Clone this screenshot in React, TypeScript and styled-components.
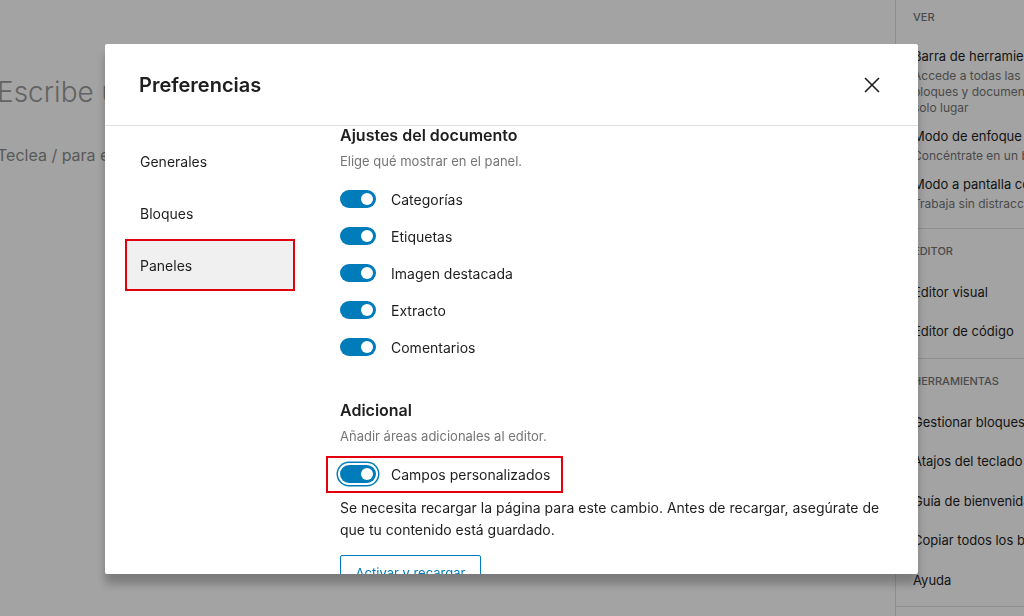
import { createGlobalStyle, styled } from "styled-components";

const GlobalStyle = createGlobalStyle`
  body {
    margin: 0;
    font-family: Inter, "Noto Sans", sans-serif;
    color: #1e1e1e;
  }
`;

const blue = "#007cba";
const annotation = "#e3000f";

const Page = styled.div`
  display: flex;
  height: 616px;
  overflow: hidden;
  background: #fff;
`;

const EditorArea = styled.div`
  flex: 1;
  padding-top: 74px;
  margin-left: -3px;
`;

const TitlePlaceholder = styled.div`
  font-size: 28px;
  line-height: 36px;
  font-weight: 300;
  color: #9c9c9c;
`;

const ParagraphPlaceholder = styled.div`
  margin-top: 33px;
  font-size: 16px;
  line-height: 24px;
  color: #8c8c8c;
`;

const Sidebar = styled.aside`
  width: 128px;
  border-left: 1px solid #e0e0e0;
  overflow: hidden;
  white-space: nowrap;
`;

const Group = styled.div<{ $pad: string }>`
  padding: ${(p) => p.$pad};
  padding-left: 17px;
  border-bottom: 1px solid #e0e0e0;
`;

const GroupLabel = styled.div<{ $space: number }>`
  font-size: 11px;
  line-height: 18px;
  font-weight: 500;
  text-transform: uppercase;
  color: #757575;
  margin-bottom: ${(p) => p.$space}px;
`;

const MenuItem = styled.div<{ $pad?: number }>`
  padding: ${(p) => p.$pad ?? 9.5}px 0;
  font-size: 13px;
  line-height: 20px;
`;

const MenuInfo = styled.div`
  margin-top: 2px;
  font-size: 12px;
  line-height: 16px;
  color: #757575;
`;

const Overlay = styled.div`
  position: fixed;
  inset: 0;
  background: rgba(0, 0, 0, 0.36);
`;

const Modal = styled.div`
  margin: 44px 0 0 105px;
  width: 813px;
  height: 530px;
  background: #fff;
  border-radius: 2px;
  box-shadow: 0 10px 10px rgba(0, 0, 0, 0.25);
  display: flex;
  flex-direction: column;
  overflow: hidden;
`;

const Header = styled.div`
  height: 81px;
  flex-shrink: 0;
  display: flex;
  align-items: center;
  justify-content: space-between;
  padding: 0 28px 0 34px;
  border-bottom: 1px solid #ddd;
`;

const Title = styled.h1`
  margin: 0;
  font-size: 20px;
  font-weight: 600;
  line-height: 28px;
`;

const CloseButton = styled.button`
  width: 36px;
  height: 36px;
  border: 0;
  background: none;
  padding: 0;
  display: flex;
  align-items: center;
  justify-content: center;
  color: #1e1e1e;
`;

const Body = styled.div`
  flex: 1;
  display: flex;
  overflow: hidden;
`;

const Nav = styled.nav`
  width: 221px;
  flex-shrink: 0;
  box-sizing: border-box;
  padding: 9px 0 0 20px;
`;

const NavItem = styled.div<{ $active?: boolean }>`
  width: 170px;
  height: 52px;
  box-sizing: border-box;
  display: flex;
  align-items: center;
  padding-left: 13px;
  font-size: 14px;
  border: 2.5px solid ${(p) => (p.$active ? annotation : "transparent")};
  background: ${(p) => (p.$active ? "#f0f0f0" : "transparent")};
`;

const Content = styled.div`
  flex: 1;
  padding-left: 14px;
  max-width: 548px;
`;

const SectionTitle = styled.h2<{ $top: number }>`
  margin: ${(p) => p.$top}px 0 0;
  font-size: 16px;
  line-height: 20px;
  font-weight: 600;
`;

const SectionHint = styled.p`
  margin: 7px 0 19px;
  font-size: 13px;
  line-height: 18px;
  color: #757575;
`;

const ToggleList = styled.div`
  display: flex;
  flex-direction: column;
  gap: 17px;
`;

const ToggleRow = styled.label<{ $marked?: boolean }>`
  position: relative;
  display: inline-flex;
  align-self: flex-start;
  align-items: center;
  gap: 15px;
  height: 20px;
  font-size: 14px;

  ${(p) =>
    p.$marked &&
    `
    &::after {
      content: "";
      position: absolute;
      top: -8px;
      bottom: -9px;
      left: -14px;
      right: -13px;
      border: 2.5px solid ${annotation};
    }
  `}
`;

const Track = styled.span<{ $focused?: boolean }>`
  width: 36px;
  height: 18px;
  border-radius: 9px;
  background: ${blue};
  position: relative;
  flex-shrink: 0;
  box-shadow: ${(p) =>
    p.$focused ? `0 0 0 2px #fff, 0 0 0 3.5px ${blue}` : "none"};

  &::after {
    content: "";
    position: absolute;
    top: 3px;
    right: 3px;
    width: 12px;
    height: 12px;
    border-radius: 50%;
    background: #fff;
  }
`;

const Notice = styled.p`
  margin: 13px 0 14px;
  font-size: 14px;
  line-height: 22px;
`;

const ReloadButton = styled.button`
  height: 36px;
  padding: 0 12px;
  width: 141px;
  border: 1px solid ${blue};
  border-radius: 2px;
  background: #fff;
  color: ${blue};
  font-family: inherit;
  font-size: 13px;
`;

const docPanels = ["Categorías", "Etiquetas", "Imagen destacada", "Extracto", "Comentarios"];
const tools = [
  "Gestionar bloques",
  "Atajos del teclado",
  "Guía de bienvenida",
  "Copiar todos los bloques",
  "Ayuda",
];

const CloseIcon = () => (
  <svg width="24" height="24" viewBox="0 0 24 24" fill="none">
    <path d="M5 5 L19 19 M19 5 L5 19" stroke="currentColor" strokeWidth="1.6" />
  </svg>
);

const Toggle = ({ label, focused, marked }: { label: string; focused?: boolean; marked?: boolean }) => (
  <ToggleRow $marked={marked}>
    <Track $focused={focused} />
    {label}
  </ToggleRow>
);

export default function App() {
  return (
    <>
      <GlobalStyle />
      <Page>
        <EditorArea>
          <TitlePlaceholder>Escribe un título</TitlePlaceholder>
          <ParagraphPlaceholder>Teclea / para elegir un bloque</ParagraphPlaceholder>
        </EditorArea>
        <Sidebar>
          <Group $pad="8px 0 11px">
            <GroupLabel $space={15}>Ver</GroupLabel>
            <MenuItem $pad={5}>
              Barra de herramientas superior
              <MenuInfo>
                Accede a todas las herramientas de los
                <br />
                bloques y documentos en un
                <br />
                solo lugar
              </MenuInfo>
            </MenuItem>
            <MenuItem $pad={5}>
              Modo de enfoque
              <MenuInfo>Concéntrate en un bloque cada vez</MenuInfo>
            </MenuItem>
            <MenuItem $pad={5}>
              Modo a pantalla completa
              <MenuInfo>Trabaja sin distracciones</MenuInfo>
            </MenuItem>
          </Group>
          <Group $pad="13px 0 8px">
            <GroupLabel $space={12}>Editor</GroupLabel>
            <MenuItem>Editor visual</MenuItem>
            <MenuItem>Editor de código</MenuItem>
          </Group>
          <Group $pad="13px 0 6px">
            <GroupLabel $space={12}>Herramientas</GroupLabel>
            {tools.map((t) => (
              <MenuItem key={t} $pad={9.75}>
                {t}
              </MenuItem>
            ))}
          </Group>
        </Sidebar>
      </Page>
      <Overlay>
        <Modal>
          <Header>
            <Title>Preferencias</Title>
            <CloseButton aria-label="Cerrar">
              <CloseIcon />
            </CloseButton>
          </Header>
          <Body>
            <Nav>
              <NavItem>Generales</NavItem>
              <NavItem>Bloques</NavItem>
              <NavItem $active>Paneles</NavItem>
            </Nav>
            <Content>
              <SectionTitle $top={-1}>Ajustes del documento</SectionTitle>
              <SectionHint>Elige qué mostrar en el panel.</SectionHint>
              <ToggleList>
                {docPanels.map((p) => (
                  <Toggle key={p} label={p} />
                ))}
              </ToggleList>
              <SectionTitle $top={43}>Adicional</SectionTitle>
              <SectionHint>Añadir áreas adicionales al editor.</SectionHint>
              <ToggleList>
                <Toggle label="Campos personalizados" focused marked />
              </ToggleList>
              <Notice>
                Se necesita recargar la página para este cambio. Antes de recargar, asegúrate de que tu
                contenido está guardado.
              </Notice>
              <ReloadButton>Activar y recargar</ReloadButton>
            </Content>
          </Body>
        </Modal>
      </Overlay>
    </>
  );
}
